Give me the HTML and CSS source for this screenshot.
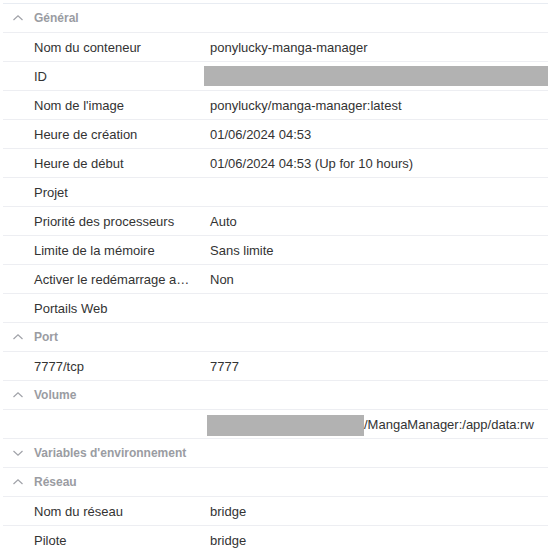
FILE: index.html
```html
<!DOCTYPE html>
<html lang="fr">
<head>
<meta charset="utf-8">
<link rel="stylesheet" href="styles.css">
</head>
<body>
<div class="panel">
  <div class="group open">
    <div class="ghead"><svg class="chev" viewBox="0 0 12 12"><path d="M1.5 8 L6 3.8 L10.5 8"/></svg><span>Général</span></div>
    <div class="row"><div class="k">Nom du conteneur</div><div class="v">ponylucky-manga-manager</div></div>
    <div class="row"><div class="k">ID</div><div class="v"><span class="redact-full"></span></div></div>
    <div class="row"><div class="k">Nom de l'image</div><div class="v">ponylucky/manga-manager:latest</div></div>
    <div class="row"><div class="k">Heure de création</div><div class="v">01/06/2024 04:53</div></div>
    <div class="row"><div class="k">Heure de début</div><div class="v">01/06/2024 04:53 (Up for 10 hours)</div></div>
    <div class="row"><div class="k">Projet</div><div class="v"></div></div>
    <div class="row"><div class="k">Priorité des processeurs</div><div class="v">Auto</div></div>
    <div class="row"><div class="k">Limite de la mémoire</div><div class="v">Sans limite</div></div>
    <div class="row"><div class="k">Activer le redémarrage automatique</div><div class="v">Non</div></div>
    <div class="row"><div class="k">Portails Web</div><div class="v"></div></div>
  </div>
  <div class="group open">
    <div class="ghead"><svg class="chev" viewBox="0 0 12 12"><path d="M1.5 8 L6 3.8 L10.5 8"/></svg><span>Port</span></div>
    <div class="row"><div class="k">7777/tcp</div><div class="v">7777</div></div>
  </div>
  <div class="group open">
    <div class="ghead"><svg class="chev" viewBox="0 0 12 12"><path d="M1.5 8 L6 3.8 L10.5 8"/></svg><span>Volume</span></div>
    <div class="row"><div class="k"></div><div class="v"><span class="redact-part"></span>/MangaManager:/app/data:rw</div></div>
  </div>
  <div class="group">
    <div class="ghead"><svg class="chev" viewBox="0 0 12 12"><path d="M1.5 4 L6 8.2 L10.5 4"/></svg><span>Variables d'environnement</span></div>
  </div>
  <div class="group open">
    <div class="ghead"><svg class="chev" viewBox="0 0 12 12"><path d="M1.5 8 L6 3.8 L10.5 8"/></svg><span>Réseau</span></div>
    <div class="row"><div class="k">Nom du réseau</div><div class="v">bridge</div></div>
    <div class="row"><div class="k">Pilote</div><div class="v">bridge</div></div>
  </div>
</div>
</body>
</html>
```

FILE: styles.css
```css
html, body {
  margin: 0;
  padding: 0;
  background: #ffffff;
}
body {
  font-family: "Liberation Sans", Arial, sans-serif;
  font-size: 13px;
  color: #333333;
  overflow: hidden;
}
.panel {
  padding: 3px 0 0 3px;
}
.panel > .group:first-child > .ghead {
  border-top: 1px solid #e8ecf2;
}
.ghead, .row {
  display: flex;
  align-items: center;
  height: 28px;
  border-bottom: 1px solid #edeef2;
}
.ghead {
  font-size: 12px;
  font-weight: bold;
  color: #9a9ca2;
  padding-left: 9px;
}
.chev {
  width: 12px;
  height: 12px;
  margin-right: 10px;
  fill: none;
  stroke: #a0a2a8;
  stroke-width: 1.2;
}
.k {
  width: 156px;
  padding-left: 31px;
  padding-right: 14px;
  white-space: nowrap;
  overflow: hidden;
  text-overflow: ellipsis;
  flex: none;
}
.v {
  flex: 1;
  padding-left: 6px;
  white-space: nowrap;
  display: flex;
  align-items: center;
  height: 100%;
}
.redact-full {
  display: block;
  width: calc(100% + 6px);
  margin-left: -6px;
  height: 20px;
  background: #b2b2b2;
}
.redact-part {
  display: inline-block;
  width: 157px;
  height: 21px;
  background: #b2b2b2;
  margin-left: -3px;
  margin-top: 2px;
}
```
